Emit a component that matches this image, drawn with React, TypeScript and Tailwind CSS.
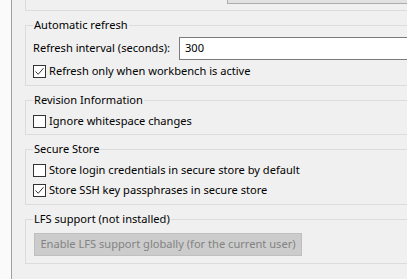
import React from "react";

const Check = ({ checked }: { checked?: boolean }) => (
  <span className="w-[13px] h-[13px] border border-[#333333] bg-white flex items-center justify-center shrink-0">
    {checked && (
      <svg width="11" height="11" viewBox="0 0 11 11">
        <path d="M1.5 5.5 L4.2 8.3 L9.5 2.2" stroke="#333333" strokeWidth="1" fill="none" />
      </svg>
    )}
  </span>
);

const CheckRow = ({ label, checked, className }: { label: string; checked?: boolean; className?: string }) => (
  <div className={"flex items-center h-[16px] gap-[3px] " + (className ?? "")}>
    <Check checked={checked} />
    <span>{label}</span>
  </div>
);

const Group = ({ title, className, children }: { title: string; className?: string; children: React.ReactNode }) => (
  <fieldset className={"w-[420px] border border-[#dcdcdc] pl-[7px] " + (className ?? "")}>
    <legend className="px-[1px] leading-[16px]">{title}</legend>
    {children}
  </fieldset>
);

export default function App() {
  return (
    <div
      className="w-[407px] h-[279px] overflow-hidden bg-[#f0f0f0] flex text-[11.1px] text-black whitespace-nowrap"
      style={{ fontFamily: '"Noto Sans", "Segoe UI", sans-serif' }}
    >
      <div className="w-[12px] shrink-0 bg-[#fafafa] border-r border-[#a0a0a0]" />
      <div className="flex flex-col pl-[13px]">
        {/* tail of the group above */}
        <div className="w-[420px] h-[11px] border-l border-b border-[#dcdcdc] pl-[201px]">
          <div className="h-[4px] bg-[#e1e1e1] border-l border-b border-[#adadad]" />
        </div>

        <Group title="Automatic refresh" className="mt-[6px] pb-[6px]">
          <div className="flex items-center h-[23px] mt-[4px]">
            <span className="w-[146px] shrink-0">Refresh interval (seconds):</span>
            <div className="flex-1 h-[23px] border border-[#7a7a7a] bg-white pl-[5px] flex items-center">300</div>
          </div>
          <CheckRow label="Refresh only when workbench is active" checked className="mt-[3px]" />
        </Group>

        <Group title="Revision Information" className="mt-[6px] pb-[5px]">
          <CheckRow label="Ignore whitespace changes" className="mt-[5px]" />
        </Group>

        <Group title="Secure Store" className="mt-[6px] pb-[6px]">
          <CheckRow label="Store login credentials in secure store by default" className="mt-[5px]" />
          <CheckRow label="Store SSH key passphrases in secure store" checked className="mt-[4px]" />
        </Group>

        <Group title="LFS support (not installed)" className="mt-[6px] pb-[7px]">
          <div className="mt-[6px] ml-[1px] w-[268px] h-[23px] bg-[#cccccc] border border-[#bfbfbf] text-[#838383] flex items-center justify-center">
            Enable LFS support globally (for the current user)
          </div>
        </Group>
      </div>
    </div>
  );
}
